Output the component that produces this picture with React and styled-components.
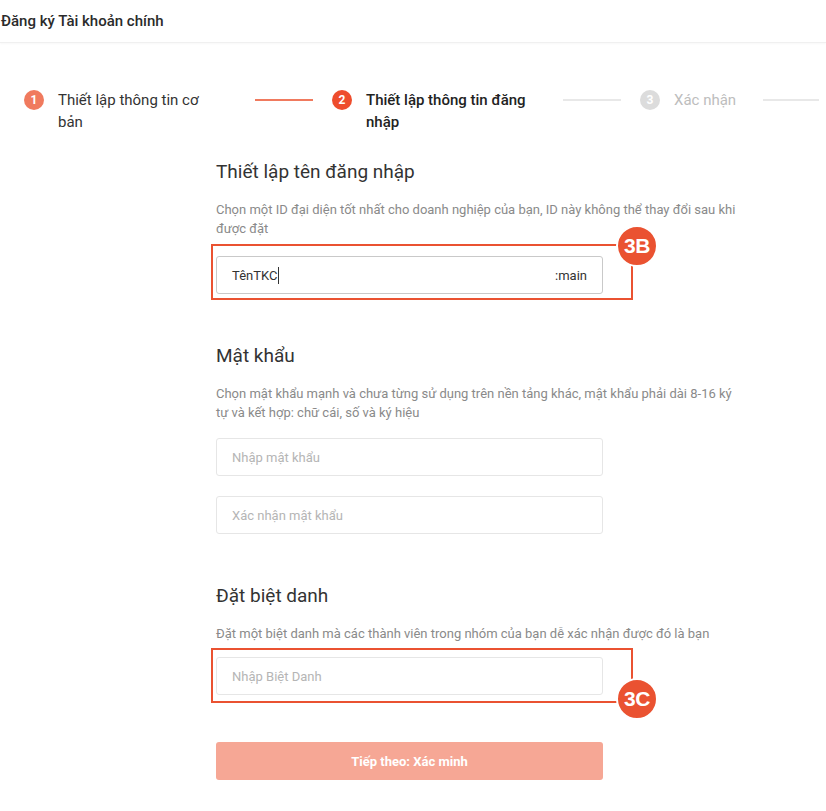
import React from "react";
import styled, { createGlobalStyle } from "styled-components";

const Global = createGlobalStyle`
  html, body { margin: 0; padding: 0; background: #fff; }
  body { font-family: Roboto, "Noto Sans", "Liberation Sans", sans-serif; color: #333; }
  * { box-sizing: border-box; }
`;

const Page = styled.div`
  width: 826px;
  min-height: 811px;
  overflow: hidden;
  background: #fff;
`;

const Header = styled.div`
  height: 43px;
  display: flex;
  align-items: center;
  padding-left: 1px;
  font-size: 15px;
  font-weight: 500;
  color: #2b2b2b;
  border-bottom: 1px solid #f0f0f0;
  box-shadow: 0 1px 2px rgba(0, 0, 0, 0.03);
`;

const Steps = styled.div`
  display: flex;
  padding: 46px 7px 0 24px;
`;

const Step = styled.div`
  display: flex;
  align-items: flex-start;
  flex: ${(p) => (p.$last ? "1 1 auto" : "0 0 308px")};
`;

const Circle = styled.div`
  width: 20px;
  height: 20px;
  border-radius: 50%;
  flex: 0 0 20px;
  margin-top: 1px;
  background: ${(p) => p.$bg};
  color: #fff;
  font-size: 12px;
  font-weight: 700;
  display: flex;
  align-items: center;
  justify-content: center;
`;

const Label = styled.div`
  margin-left: 14px;
  max-width: 165px;
  font-size: 15px;
  line-height: 22px;
  font-weight: ${(p) => (p.$active ? 500 : 400)};
  color: ${(p) => p.$color};
`;

const Line = styled.div`
  flex: 1;
  height: 2px;
  margin: 10px ${(p) => (p.$last ? "0" : "19px")} 0 ${(p) => (p.$last ? "27px" : "32px")};
  background: ${(p) => p.$color};
`;

const Form = styled.div`
  width: 550px;
  margin: 27px 0 0 216px;
  display: flex;
  flex-direction: column;
`;

const Section = styled.div`
  display: flex;
  flex-direction: column;
  margin-bottom: 50px;
`;

const Heading = styled.div`
  font-size: 19px;
  line-height: 24px;
  color: #333;
  margin-bottom: 16px;
`;

const Desc = styled.div`
  font-size: 13px;
  line-height: 19px;
  color: #8a8a8a;
  margin-bottom: ${(p) => p.$gap}px;
`;

const Inputs = styled.div`
  display: flex;
  flex-direction: column;
  gap: 20px;
`;

const Field = styled.div`
  position: relative;
  width: 387px;
  height: 38px;
  border: 1px solid ${(p) => (p.$focus ? "#c9c9c9" : "#e6e6e6")};
  border-radius: 3px;
  display: flex;
  align-items: center;
  padding: 0 15px;
  font-size: 13px;
  background: #fff;
`;

const Value = styled.span`
  color: #333;
  display: flex;
  align-items: center;
`;

const Caret = styled.span`
  width: 1px;
  height: 17px;
  background: #333;
  margin-left: 1px;
`;

const Placeholder = styled.span`
  color: #b5b5b5;
`;

const Suffix = styled.span`
  margin-left: auto;
  color: #333;
`;

const Highlight = styled.div`
  position: absolute;
  left: -6px;
  right: -31px;
  top: ${(p) => p.$top}px;
  bottom: ${(p) => p.$bottom}px;
  border: 2px solid #ea5231;
  pointer-events: none;
`;

const Badge = styled.div`
  position: absolute;
  width: 42px;
  height: 42px;
  border-radius: 50%;
  background: #ea5231;
  border: 2px solid #fff;
  color: #fff;
  font-family: "Liberation Sans", Arial, sans-serif;
  font-weight: 700;
  font-size: 21px;
  letter-spacing: -0.5px;
  display: flex;
  align-items: center;
  justify-content: center;
  right: -27px;
  ${(p) => (p.$pos === "top" ? "top: -21px;" : "bottom: -19px;")}
`;

const Button = styled.button`
  margin-top: -3px;
  width: 387px;
  height: 38px;
  border: none;
  border-radius: 3px;
  background: #f6a795;
  color: #fff;
  font-family: Roboto, "Liberation Sans", sans-serif;
  font-size: 13px;
  font-weight: 700;
`;

const steps = [
  { n: 1, text: "Thiết lập thông tin cơ bản", circle: "#f07a5e", color: "#333", line: "#f07a5e" },
  { n: 2, text: "Thiết lập thông tin đăng nhập", circle: "#ee4d2d", color: "#222", line: "#e8e8e8", active: true },
  { n: 3, text: "Xác nhận", circle: "#dcdcdc", color: "#bdbdbd", line: "#e8e8e8", last: true },
];

export default function App() {
  return (
    <Page>
      <Global />
      <Header>Đăng ký Tài khoản chính</Header>
      <Steps>
        {steps.map((s) => (
          <Step key={s.n} $last={s.last}>
            <Circle $bg={s.circle}>{s.n}</Circle>
            <Label $color={s.color} $active={s.active}>{s.text}</Label>
            <Line $color={s.line} $last={s.last} />
          </Step>
        ))}
      </Steps>
      <Form>
        <Section>
          <Heading>Thiết lập tên đăng nhập</Heading>
          <Desc $gap={18}>
            Chọn một ID đại diện tốt nhất cho doanh nghiệp của bạn, ID này không thể thay đổi sau khi được đặt
          </Desc>
          <Field $focus>
            <Value>
              TênTKC
              <Caret />
            </Value>
            <Suffix>:main</Suffix>
            <Highlight $top={-13} $bottom={-7}>
              <Badge $pos="top">3B</Badge>
            </Highlight>
          </Field>
        </Section>
        <Section>
          <Heading>Mật khẩu</Heading>
          <Desc $gap={16}>
            Chọn mật khẩu mạnh và chưa từng sử dụng trên nền tảng khác, mật khẩu phải dài 8-16 ký
            <br />
            tự và kết hợp: chữ cái, số và ký hiệu
          </Desc>
          <Inputs>
            <Field>
              <Placeholder>Nhập mật khẩu</Placeholder>
            </Field>
            <Field>
              <Placeholder>Xác nhận mật khẩu</Placeholder>
            </Field>
          </Inputs>
        </Section>
        <Section>
          <Heading>Đặt biệt danh</Heading>
          <Desc $gap={14}>Đặt một biệt danh mà các thành viên trong nhóm của bạn dễ xác nhận được đó là bạn</Desc>
          <Field>
            <Placeholder>Nhập Biệt Danh</Placeholder>
            <Highlight $top={-10} $bottom={-9}>
              <Badge $pos="bottom">3C</Badge>
            </Highlight>
          </Field>
        </Section>
        <Button>Tiếp theo: Xác minh</Button>
      </Form>
    </Page>
  );
}
